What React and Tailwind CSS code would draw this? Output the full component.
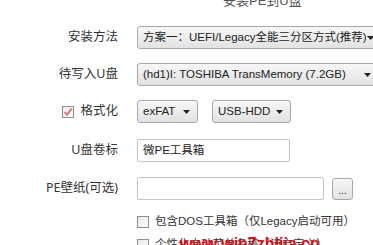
import React from 'react';

const Arrow = () => (
    <svg width="7" height="4" viewBox="0 0 7 4" className="shrink-0">
        <path d="M0 0 H7 L3.5 4 Z" fill="#222" />
    </svg>
);

const Select = ({ value, className }) => (
    <div className={`h-[23px] flex items-center justify-between pl-[5px] pr-[7px] border border-[#a9a9a9] rounded-[3px] bg-gradient-to-b from-[#f7f7f7] to-[#e2e2e2] text-[11.5px] text-[#222] whitespace-nowrap ${className}`}>
        <span>{value}</span>
        <Arrow />
    </div>
);

const Box = ({ checked }) => (
    <div className="w-[12px] h-[12px] border border-[#8f8f8f] bg-gradient-to-br from-[#e9e9e9] to-white flex items-center justify-center shrink-0">
        {checked && (
            <svg width="10" height="10" viewBox="0 0 10 10">
                <path d="M1.5 5 L4 7.8 L8.6 1.6" stroke="#e0705f" strokeWidth="1.8" fill="none" />
            </svg>
        )}
    </div>
);

const Row = ({ label, children, className }) => (
    <div className={`flex items-center ${className}`}>
        <div className="w-[118px] shrink-0 flex items-center justify-end gap-[6px] text-[12.5px] text-[#333] font-['Noto_Sans','Noto_Sans_CJK_SC',sans-serif]">{label}</div>
        <div className="ml-[19px] flex items-center gap-[14px]">{children}</div>
    </div>
);

export default function App() {
    return (
        <div className="relative w-[373px] h-[245px] overflow-hidden bg-white font-['Liberation_Sans','Noto_Sans_CJK_SC',sans-serif]">
            <div className="h-[26px] flex items-start">
                <div className="-mt-[9px] pl-[223px] text-[13px] text-[#555]">安装PE到U盘</div>
            </div>

            <Row label="安装方法">
                <Select className="w-[242px]" value="方案一：UEFI/Legacy全能三分区方式(推荐)" />
            </Row>

            <Row label="待写入U盘" className="mt-[14px]">
                <Select className="w-[242px]" value="(hd1)I: TOSHIBA TransMemory (7.2GB)" />
            </Row>

            <Row label={<><Box checked /><span>格式化</span></>} className="mt-[14px]">
                <Select className="w-[61px]" value="exFAT" />
                <Select className="w-[79px]" value="USB-HDD" />
            </Row>

            <Row label="U盘卷标" className="mt-[16px]">
                <div className="w-[153px] h-[23px] flex items-center pl-[5px] border border-[#c4c4c4] rounded-[2px] bg-white text-[11.5px] text-[#222]">微PE工具箱</div>
            </Row>

            <Row label="PE壁纸(可选)" className="mt-[15px]">
                <div className="flex items-center gap-[8px]">
                    <div className="w-[187px] h-[23px] border border-[#c4c4c4] rounded-[2px] bg-white" />
                    <div className="w-[21px] h-[22px] flex items-end justify-center pb-[3px] border border-[#a9a9a9] rounded-[3px] bg-gradient-to-b from-[#f7f7f7] to-[#e2e2e2] text-[10px] leading-none text-[#222]">...</div>
                </div>
            </Row>

            <div className="mt-[13px] ml-[137px] flex items-center gap-[6px] text-[11.5px] text-[#333] whitespace-nowrap">
                <Box />
                <span>包含DOS工具箱（仅Legacy启动可用）</span>
            </div>

            <div className="mt-[6px] ml-[137px] flex items-center gap-[6px] text-[11.5px] text-[#333] whitespace-nowrap">
                <Box />
                <span>个性化启动菜单名称（请自定义）</span>
            </div>

            <div className="absolute left-[180px] top-[236px] text-[16px] font-bold leading-none text-[#e0101a]">www.win7zhijia.cn</div>
        </div>
    );
}
